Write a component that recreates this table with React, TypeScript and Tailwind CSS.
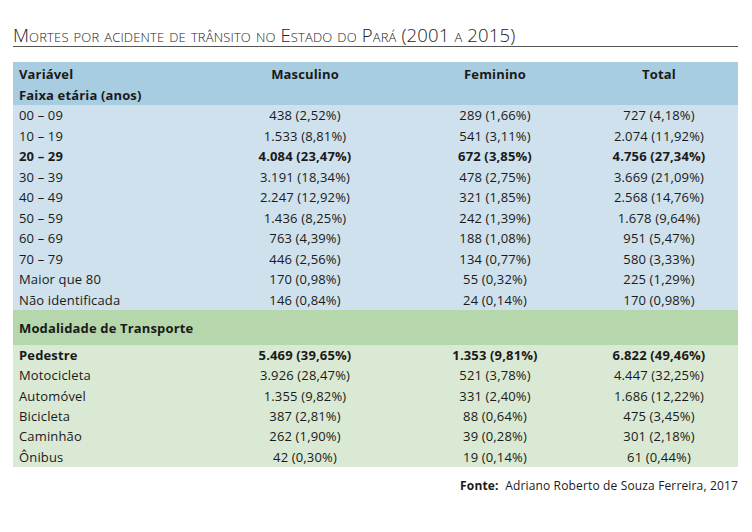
import React from 'react';

type Row = { label: string; m: string; f: string; t: string; bold?: boolean };

const idade: Row[] = [
  { label: '00 – 09', m: '438 (2,52%)', f: '289 (1,66%)', t: '727 (4,18%)' },
  { label: '10 – 19', m: '1.533 (8,81%)', f: '541 (3,11%)', t: '2.074 (11,92%)' },
  { label: '20 – 29', m: '4.084 (23,47%)', f: '672 (3,85%)', t: '4.756 (27,34%)', bold: true },
  { label: '30 – 39', m: '3.191 (18,34%)', f: '478 (2,75%)', t: '3.669 (21,09%)' },
  { label: '40 – 49', m: '2.247 (12,92%)', f: '321 (1,85%)', t: '2.568 (14,76%)' },
  { label: '50 – 59', m: '1.436 (8,25%)', f: '242 (1,39%)', t: '1.678 (9,64%)' },
  { label: '60 – 69', m: '763 (4,39%)', f: '188 (1,08%)', t: '951 (5,47%)' },
  { label: '70 – 79', m: '446 (2,56%)', f: '134 (0,77%)', t: '580 (3,33%)' },
  { label: 'Maior que 80', m: '170 (0,98%)', f: '55 (0,32%)', t: '225 (1,29%)' },
  { label: 'Não identificada', m: '146 (0,84%)', f: '24 (0,14%)', t: '170 (0,98%)' },
];

const transporte: Row[] = [
  { label: 'Pedestre', m: '5.469 (39,65%)', f: '1.353 (9,81%)', t: '6.822 (49,46%)', bold: true },
  { label: 'Motocicleta', m: '3.926 (28,47%)', f: '521 (3,78%)', t: '4.447 (32,25%)' },
  { label: 'Automóvel', m: '1.355 (9,82%)', f: '331 (2,40%)', t: '1.686 (12,22%)' },
  { label: 'Bicicleta', m: '387 (2,81%)', f: '88 (0,64%)', t: '475 (3,45%)' },
  { label: 'Caminhão', m: '262 (1,90%)', f: '39 (0,28%)', t: '301 (2,18%)' },
  { label: 'Ônibus', m: '42 (0,30%)', f: '19 (0,14%)', t: '61 (0,44%)' },
];

function DataRow({ row, h }: { row: Row; h: string }) {
  return (
    <div className={`grid grid-cols-[187px_210px_170px_158px] items-center ${h} ${row.bold ? 'font-bold' : ''}`}>
      <div className="pl-[6px]">{row.label}</div>
      <div className="text-center">{row.m}</div>
      <div className="text-center">{row.f}</div>
      <div className="text-center">{row.t}</div>
    </div>
  );
}

export default function App() {
  return (
    <div className="w-[752px] h-[532px] bg-white text-[#1a1a1a] font-['Open_Sans','Liberation_Sans',sans-serif] text-[13px] leading-[18px] tracking-[0.15px]">
      <div className="pl-[13px] pt-[24px] w-[738px]">
        <h1 className="border-b border-[#555] text-[18.5px] leading-[21px] pb-[1px] font-light text-[#222] [font-variant:small-caps]">
          Mortes por acidente de trânsito no Estado do Pará (2001 a 2015)
        </h1>

        <div className="mt-[15px]">
          <div className="bg-[#a8cde1] font-bold pt-[1px]">
            <div className="grid grid-cols-[187px_210px_170px_158px] items-center h-[21px]">
              <div className="pl-[6px]">Variável</div>
              <div className="text-center">Masculino</div>
              <div className="text-center">Feminino</div>
              <div className="text-center">Total</div>
            </div>
            <div className="h-[21px] flex items-center pl-[6px]">Faixa etária (anos)</div>
          </div>

          <div className="bg-[#cee1ec]">
            {idade.map((r) => (
              <DataRow key={r.label} row={r} h="h-[20.5px]" />
            ))}
          </div>

          <div className="bg-[#b5d7ab] h-[35px] flex items-center pl-[6px] font-bold">Modalidade de Transporte</div>

          <div className="bg-[#d9e9d3]">
            {transporte.map((r) => (
              <DataRow key={r.label} row={r} h="h-[20.3px]" />
            ))}
          </div>
        </div>

        <div className="mt-[10px] text-right text-[12px]">
          <span className="font-bold">Fonte:</span>&nbsp; Adriano Roberto de Souza Ferreira, 2017
        </div>
      </div>
    </div>
  );
}
